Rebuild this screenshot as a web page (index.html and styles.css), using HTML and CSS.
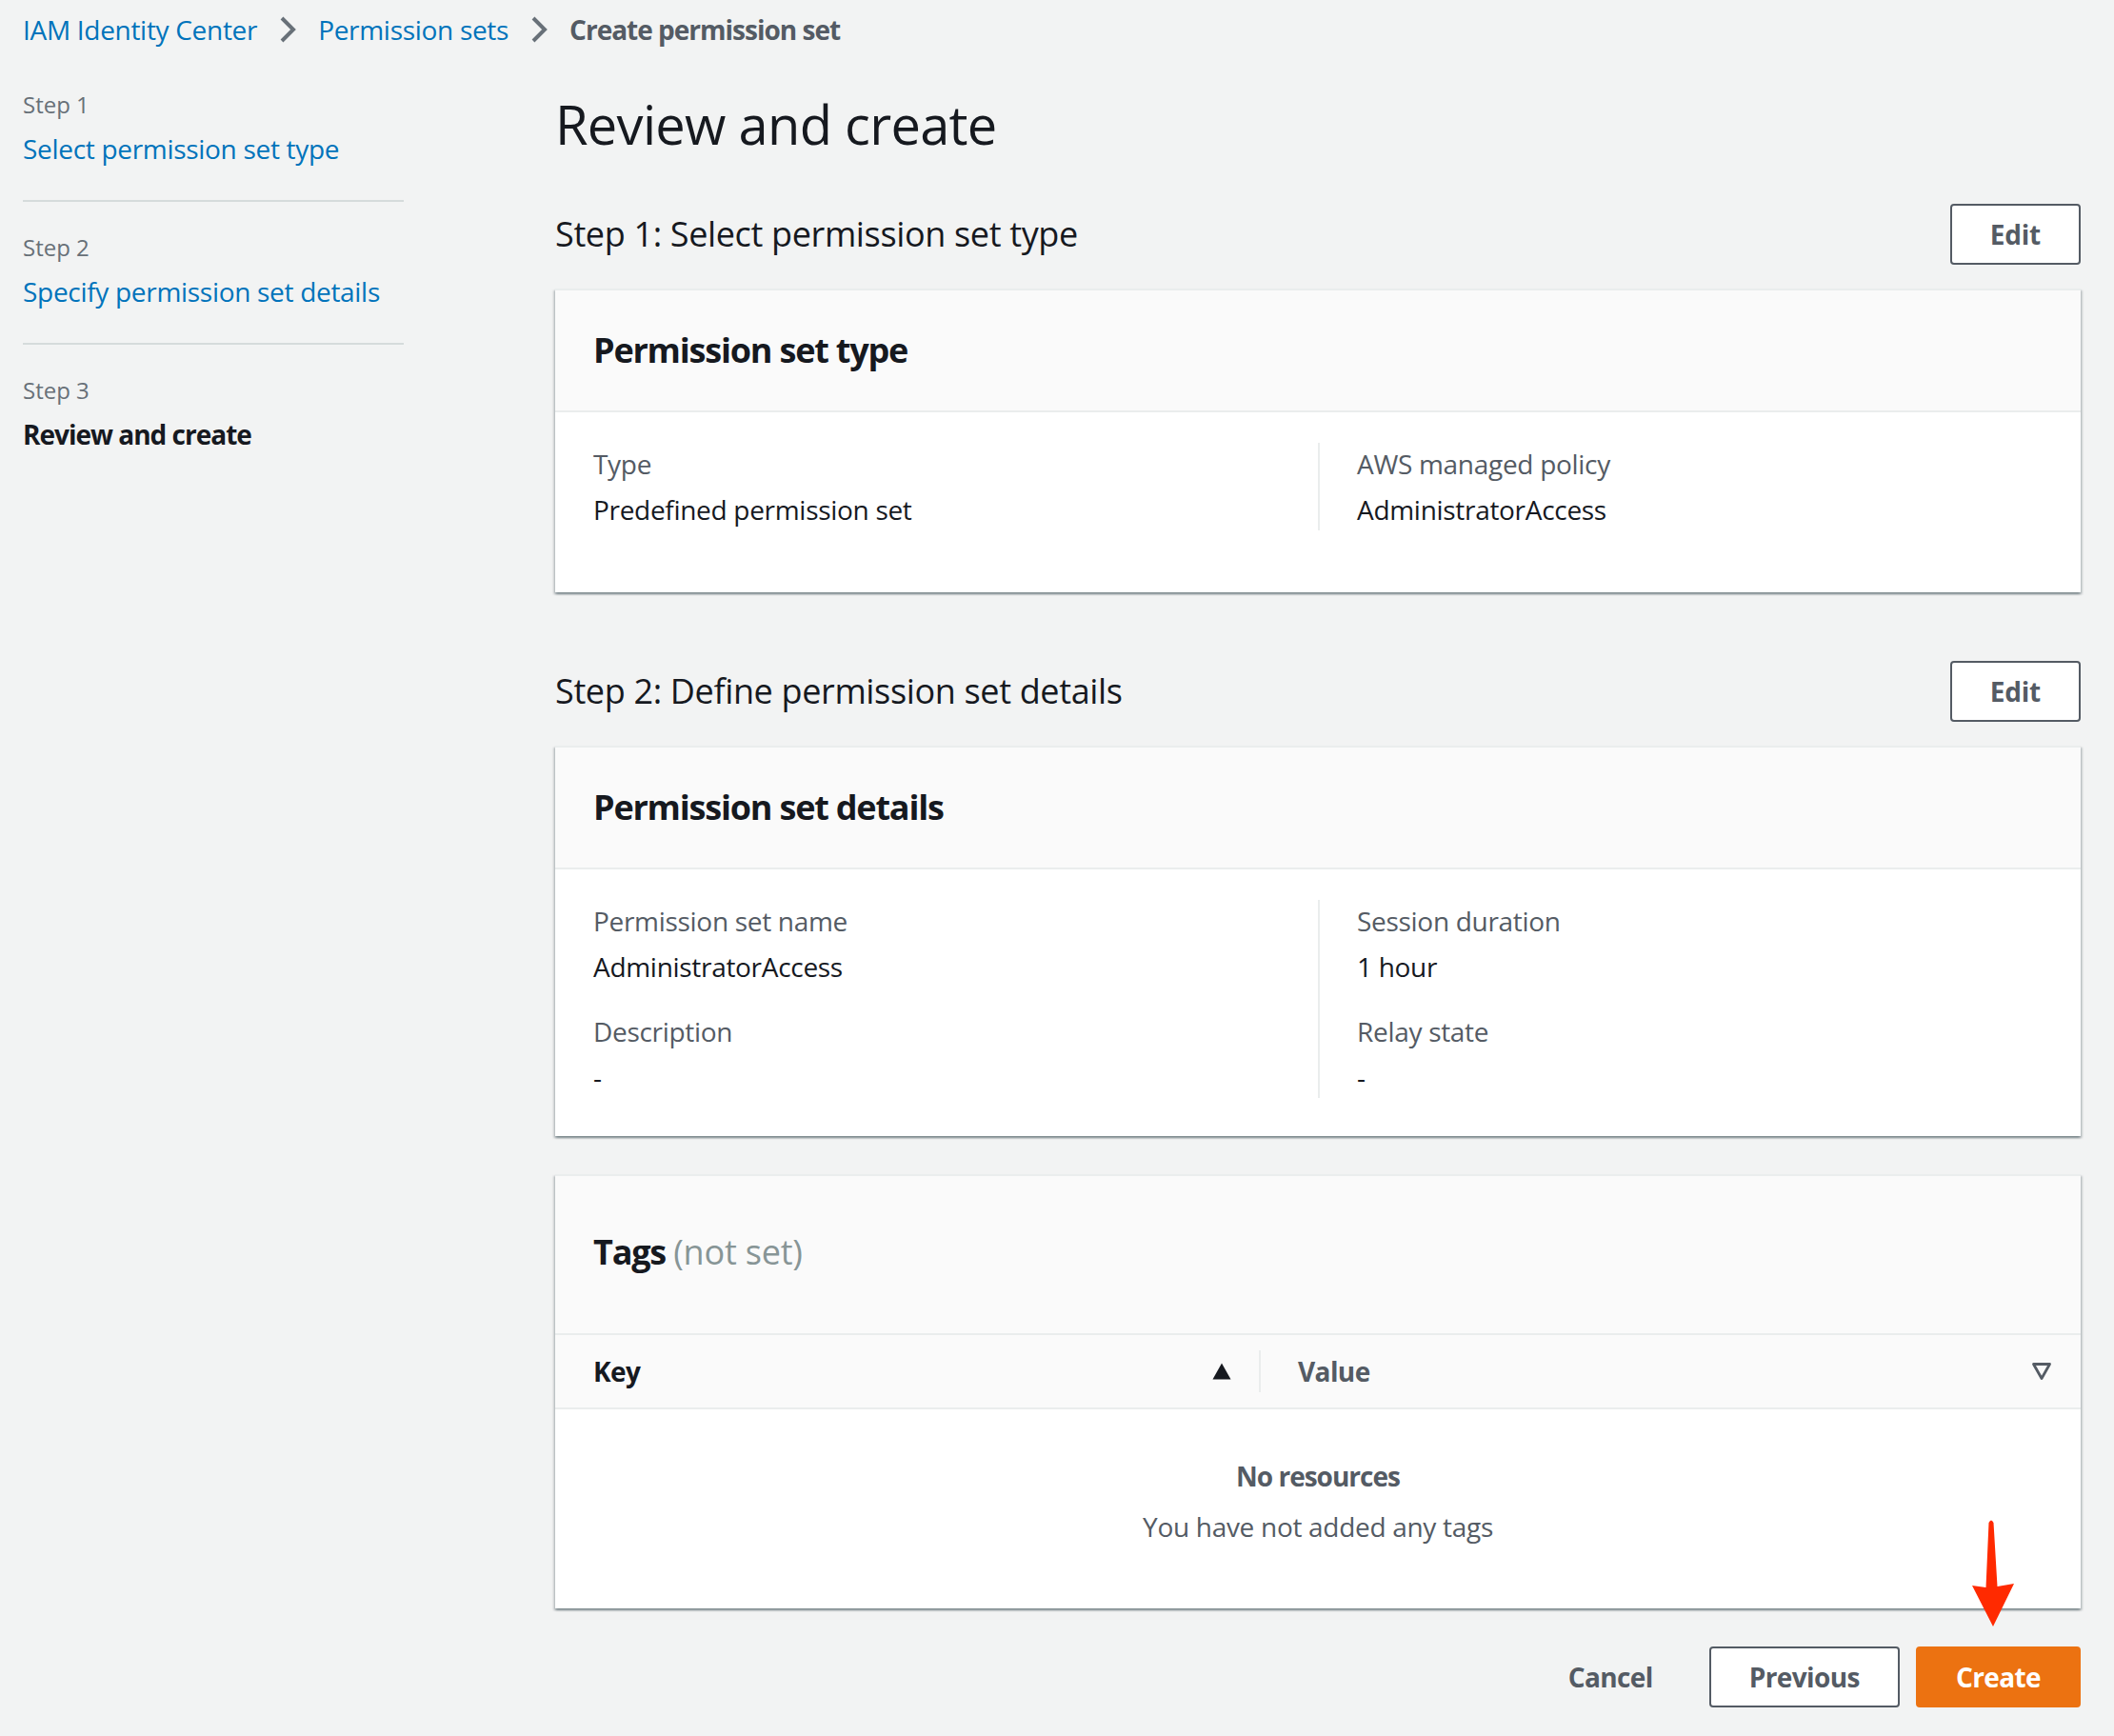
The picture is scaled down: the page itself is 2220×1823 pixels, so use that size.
FILE: index.html
```html
<!DOCTYPE html>
<html lang="en">

<head>
    <meta charset="UTF-8">
    <meta name="viewport" content="width=device-width, initial-scale=1.0">
    <title>Create permission set - IAM Identity Center</title>
    <link rel="stylesheet" href="styles.css">
</head>

<body>

    <nav class="breadcrumbs">
        <a href="#">IAM Identity Center</a>
        <svg class="crumb-sep" width="20" height="30" viewBox="0 0 20 30"><path d="M4 3 L16 15 L4 27" fill="none" stroke="#687078" stroke-width="4"/></svg>
        <a href="#">Permission sets</a>
        <svg class="crumb-sep" width="20" height="30" viewBox="0 0 20 30"><path d="M4 3 L16 15 L4 27" fill="none" stroke="#687078" stroke-width="4"/></svg>
        <span class="current">Create permission set</span>
    </nav>

    <div class="layout">
        <aside class="steps">
            <ul>
                <li class="step">
                    <span class="step-num">Step 1</span>
                    <a href="#" class="step-link">Select permission set type</a>
                </li>
                <li class="step">
                    <span class="step-num">Step 2</span>
                    <a href="#" class="step-link">Specify permission set details</a>
                </li>
                <li class="step">
                    <span class="step-num">Step 3</span>
                    <span class="step-link active">Review and create</span>
                </li>
            </ul>
        </aside>

        <main class="content">
            <h1>Review and create</h1>

            <section class="review-section">
                <div class="section-head">
                    <h2>Step 1: Select permission set type</h2>
                    <button class="btn">Edit</button>
                </div>
                <div class="card">
                    <div class="card-head">
                        <h3>Permission set type</h3>
                    </div>
                    <div class="card-body pad-lg">
                        <div class="columns">
                            <div class="col">
                                <div class="kv">
                                    <div class="kv-label">Type</div>
                                    <div class="kv-value">Predefined permission set</div>
                                </div>
                            </div>
                            <div class="col">
                                <div class="kv">
                                    <div class="kv-label">AWS managed policy</div>
                                    <div class="kv-value">AdministratorAccess</div>
                                </div>
                            </div>
                        </div>
                    </div>
                </div>
            </section>

            <section class="review-section">
                <div class="section-head">
                    <h2>Step 2: Define permission set details</h2>
                    <button class="btn">Edit</button>
                </div>
                <div class="card">
                    <div class="card-head">
                        <h3>Permission set details</h3>
                    </div>
                    <div class="card-body">
                        <div class="columns">
                            <div class="col">
                                <div class="kv">
                                    <div class="kv-label">Permission set name</div>
                                    <div class="kv-value">AdministratorAccess</div>
                                </div>
                                <div class="kv">
                                    <div class="kv-label">Description</div>
                                    <div class="kv-value">-</div>
                                </div>
                            </div>
                            <div class="col">
                                <div class="kv">
                                    <div class="kv-label">Session duration</div>
                                    <div class="kv-value">1 hour</div>
                                </div>
                                <div class="kv">
                                    <div class="kv-label">Relay state</div>
                                    <div class="kv-value">-</div>
                                </div>
                            </div>
                        </div>
                    </div>
                </div>

                <div class="card tags-card">
                    <div class="card-head tags-head">
                        <h3>Tags <span class="counter">(not set)</span></h3>
                    </div>
                    <div class="table-head">
                        <div class="th sorted">
                            <span>Key</span>
                            <svg width="22" height="20" viewBox="0 0 22 20"><path d="M11 1.5 L20.5 18.5 H1.5 Z" fill="#16191f"/></svg>
                        </div>
                        <div class="th">
                            <span>Value</span>
                            <svg width="22" height="22" viewBox="0 0 22 22"><path d="M2.5 3.5 H19.5 L11 18.5 Z" fill="none" stroke="#545b64" stroke-width="2.8" stroke-linejoin="round"/></svg>
                        </div>
                    </div>
                    <div class="empty">
                        <p class="empty-title">No resources</p>
                        <p class="empty-text">You have not added any tags</p>
                    </div>
                </div>
            </section>

            <div class="actions">
                <button class="btn btn-link">Cancel</button>
                <button class="btn">Previous</button>
                <button class="btn btn-primary">Create</button>
            </div>
        </main>
    </div>

    <!-- annotation pointing at Create -->
    <svg class="annotation" width="52" height="118" viewBox="0 0 52 118">
        <path d="M22.5 5 Q25 0 27.5 5 L31.5 72 L49 69 L27 114 L5 71 L19.5 73 Z" fill="#ff2a00"/>
    </svg>

</body>

</html>
```

FILE: styles.css
```css
body {
    font-family: 'Open Sans', 'Noto Sans', sans-serif;
    margin: 0;
    padding: 0;
    background-color: #f2f3f3;
    color: #16191f;
    font-size: 28px;
    line-height: 40px;
    letter-spacing: -0.3px;
    position: relative;
}

a {
    color: #0073bb;
    text-decoration: none;
}

.breadcrumbs {
    display: flex;
    align-items: center;
    padding: 11px 24px 0;
    height: 40px;
}

.crumb-sep {
    margin: 0 22px;
}

.breadcrumbs .current {
    color: #545b64;
    font-weight: 700;
    letter-spacing: -1px;
}

.layout {
    display: grid;
    grid-template-columns: 400px 1fr;
    column-gap: 159px;
    padding: 0 35px 0 24px;
}

/* left wizard navigation */
.steps ul {
    list-style: none;
    margin: 0;
    padding: 43px 0 0;
}

.step {
    display: flex;
    flex-direction: column;
    padding: 0 0 34px;
    border-bottom: 2px solid #d5dbdb;
}

.step + .step {
    padding-top: 32px;
}

.step:last-child {
    border-bottom: none;
}

.step-num {
    font-size: 24px;
    line-height: 32px;
    color: #687078;
    letter-spacing: 0;
}

.step-link {
    margin-top: 10px;
    line-height: 40px;
}

.step-link.active {
    font-weight: 700;
    color: #16191f;
    letter-spacing: -1px;
}

/* main column */
.content h1 {
    font-size: 56px;
    line-height: 64px;
    font-weight: 400;
    letter-spacing: -0.7px;
    margin: 47px 0 0;
}

.review-section {
    margin-top: 72px;
}

.review-section:first-of-type {
    margin-top: 52px;
}

.section-head {
    display: flex;
    align-items: center;
    justify-content: space-between;
    margin-bottom: 25px;
}

.section-head h2 {
    font-size: 36px;
    line-height: 44px;
    font-weight: 400;
    letter-spacing: -0.35px;
    margin: 0;
}

.btn {
    font-family: inherit;
    font-size: 28px;
    line-height: 40px;
    font-weight: 700;
    letter-spacing: -0.6px;
    color: #545b64;
    background-color: #fff;
    border: 2px solid #545b64;
    border-radius: 4px;
    padding: 10px 40px;
    cursor: pointer;
}

.section-head .btn {
    letter-spacing: -0.2px;
}

.btn-link {
    background: transparent;
    border-color: transparent;
}

.btn-primary {
    background-color: #ec7211;
    border-color: #ec7211;
    color: #fff;
}

.card {
    background-color: #fff;
    border-top: 2px solid #eaeded;
    box-shadow: 0 2px 2px 0 rgba(0, 28, 36, 0.3), 2px 2px 2px 0 rgba(0, 28, 36, 0.15), -2px 2px 2px 0 rgba(0, 28, 36, 0.15);
}

.card-head {
    background-color: #fafafa;
    padding: 41px 40px;
    border-bottom: 2px solid #eaeded;
}

.card-head h3 {
    font-size: 36px;
    line-height: 44px;
    font-weight: 700;
    margin: 0;
    letter-spacing: -1.2px;
}

.card-body {
    padding: 32px 40px 40px;
}

.card-body.pad-lg {
    padding-bottom: 65px;
}

.columns {
    display: grid;
    grid-template-columns: 1fr 1fr;
}

.col {
    display: flex;
    flex-direction: column;
    gap: 24px;
}

.col + .col {
    border-left: 2px solid #eaeded;
    padding-left: 39px;
}

.kv-label {
    color: #545b64;
    line-height: 44px;
}

.kv-value {
    line-height: 44px;
    margin-top: 4px;
}

/* tags table */
.tags-card {
    margin-top: 40px;
}

.tags-head {
    padding: 58px 40px 63px;
}

.counter {
    font-weight: 400;
    color: #879596;
    letter-spacing: -0.2px;
}

.table-head {
    display: grid;
    grid-template-columns: 741px 1fr;
    background-color: #fafafa;
    border-bottom: 2px solid #eaeded;
    padding: 16px 0;
}

.th {
    display: flex;
    align-items: center;
    justify-content: space-between;
    padding: 0 30px 0 40px;
    line-height: 44px;
    font-weight: 700;
    letter-spacing: -0.6px;
    color: #545b64;
}

.th.sorted {
    color: #16191f;
    border-right: 2px solid #eaeded;
    padding-right: 28px;
}

.th + .th {
    padding-left: 39px;
}

.empty {
    text-align: center;
    color: #545b64;
    padding: 50px 0 66px;
}

.empty p {
    margin: 0;
}

.empty-title {
    font-weight: 700;
    letter-spacing: -1px;
}

.empty-text {
    margin-top: 13px !important;
}

.actions {
    display: flex;
    justify-content: flex-end;
    align-items: center;
    gap: 17px;
    margin-top: 40px;
    padding-bottom: 30px;
}

.annotation {
    position: absolute;
    left: 2066px;
    top: 1594px;
}
```
